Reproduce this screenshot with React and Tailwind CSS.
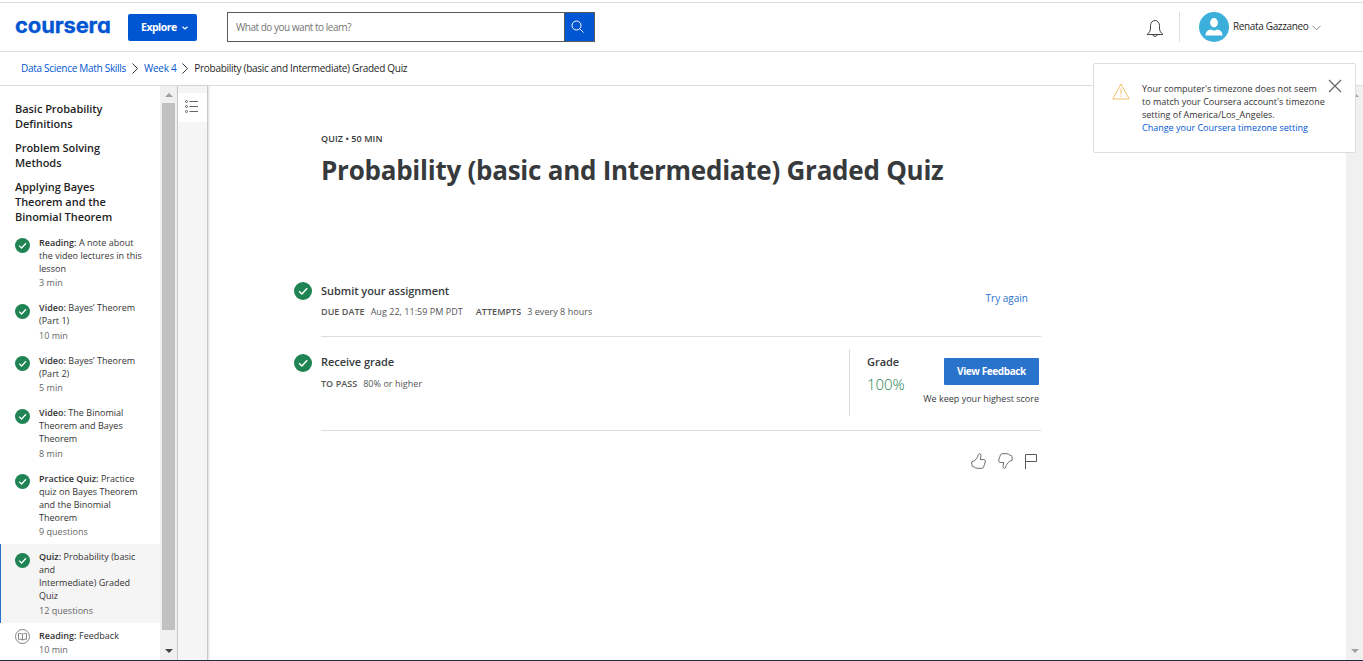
import React from 'react';

const items = [
  { kind: 'Reading:', lines: ['A note about', 'the video lectures in this', 'lesson'], meta: '3 min', box: 'h-[65px]', icon: 'mt-[8px]', metaGap: 'mt-[1px]' },
  { kind: 'Video:', lines: ['Bayes’ Theorem', '(Part 1)'], meta: '10 min', box: 'h-[53px]', icon: 'mt-[9px]', metaGap: 'mt-[2px]' },
  { kind: 'Video:', lines: ['Bayes’ Theorem', '(Part 2)'], meta: '5 min', box: 'h-[52px]', icon: 'mt-[8px]', metaGap: 'mt-[1px]' },
  { kind: 'Video:', lines: ['The Binomial', 'Theorem and Bayes', 'Theorem'], meta: '8 min', box: 'h-[66px]', icon: 'mt-[9px]', metaGap: 'mt-[2px]' },
  { kind: 'Practice Quiz:', lines: ['Practice', 'quiz on Bayes Theorem', 'and the Binomial', 'Theorem'], meta: '9 questions', box: 'h-[78px]', icon: 'mt-[8px]', metaGap: 'mt-[1px]' },
  { kind: 'Quiz:', lines: ['Probability (basic', 'and', 'Intermediate) Graded', 'Quiz'], meta: '12 questions', box: 'h-[79px]', icon: 'mt-[9px]', metaGap: 'mt-[2px]', active: true },
  { kind: 'Reading:', lines: ['Feedback'], meta: '10 min', box: 'h-[40px]', icon: 'mt-[6px]', metaGap: 'mt-[1px]', open: true },
];

function Check({ className }) {
  return (
    <svg viewBox="0 0 18 18" className={className} fill="none">
      <circle cx="9" cy="9" r="9" fill="#1f8354" />
      <path d="M5 9.2 7.9 12 13.2 6.3" stroke="#fff" strokeWidth="1.5" />
    </svg>
  );
}

function Book({ className }) {
  return (
    <svg viewBox="0 0 15 15" className={className} fill="none" stroke="#666" strokeWidth="0.8">
      <circle cx="7.5" cy="7.5" r="7" />
      <path d="M7.5 5.2C6.5 4.4 5 4.3 3.5 4.5v5.8c1.5-.2 3 0 4 .7 1-.7 2.5-.9 4-.7V4.5c-1.5-.2-3-.1-4 .7zM7.5 5.2V11" />
    </svg>
  );
}

function Header() {
  return (
    <header className="mt-[2px] flex h-[50px] shrink-0 items-start border-y border-[#dddddd] pt-[9px]">
      <div className="ml-[15px] mt-px h-[24px] w-[96px] whitespace-nowrap font-['Inter'] text-[22px] font-bold leading-[24px] tracking-[-0.15px] text-[#0056d2] [font-feature-settings:'cv11'] [-webkit-text-stroke:0.3px_#0056d2]">coursera</div>
      <button className="ml-[17px] mt-[2px] flex h-[27px] w-[69px] items-center rounded-[2px] bg-[#0056d2] pl-[13px] text-[10.5px] font-bold tracking-[-0.5px] text-white">
        Explore
        <svg viewBox="0 0 6 4" className="ml-[5px] mt-px h-[4px] w-[6px]" fill="none" stroke="#fff" strokeWidth="1.2"><path d="M.5.7 3 3 5.5.7" /></svg>
      </button>
      <div className="ml-[30px] flex h-[30px] w-[368px] border border-[#5a5a5a]">
        <div className="flex flex-1 items-center pl-[8px] text-[10px] tracking-[-0.48px] text-[#757575]">What do you want to learn?</div>
        <div className="flex w-[30px] items-center justify-center border-l border-[#5a5a5a] bg-[#0056d2]">
          <svg viewBox="0 0 13 13" className="mb-px mr-[4px] h-[13px] w-[13px]" fill="none" stroke="#fff"><circle cx="5.5" cy="5.5" r="4.5" /><path d="m8.7 8.7 3.8 3.8" /></svg>
        </div>
      </div>
      <svg viewBox="0 0 18 20" className="ml-[551px] mt-[7px] h-[20px] w-[18px]" fill="none" stroke="#444" strokeWidth="1">
        <path d="M1 15.5c2-1.5 3.5-3.500 3.500-6.500V6.500a4.500 5 0 0 1 9 0V9c0 3 1.500 5 3.500 6.500zM6.800 15.800a2.300 2.300 0 0 0 4.400 0" />
      </svg>
      <div className="ml-[15px] h-[30px] w-px bg-[#dddddd]" />
      <svg viewBox="0 0 30 30" className="ml-[19px] h-[30px] w-[30px]">
        <circle cx="15" cy="15" r="15" fill="#3cafdb" />
        <ellipse cx="15" cy="10.8" rx="3.9" ry="4.7" fill="#fff" />
        <path d="M6.500 23.500c0-4 2.500-5.300 5.600-5.900 1.700 1.300 4.100 1.300 5.800 0 3.100.6 5.600 1.900 5.600 5.900z" fill="#fff" />
      </svg>
      <span className="ml-[4px] mt-[7px] w-[76px] whitespace-nowrap text-[10px] leading-[15px] tracking-[-0.35px] text-[#1f1f1f]">Renata Gazzaneo</span>
      <svg viewBox="0 0 9 6" className="ml-[3px] mt-[13px] h-[6px] w-[9px]" fill="none" stroke="#888"><path d="m.5.8 4 4 4-4" /></svg>
    </header>
  );
}

function Crumb() {
  return <svg viewBox="0 0 6 11" className="mx-[6px] h-[11px] w-[6px]" fill="none" stroke="#333"><path d="m.5.5 5 5-5 5" /></svg>;
}

function Notice() {
  return (
    <aside className="absolute left-[1093px] top-[63px] flex h-[90px] w-[263px] rounded-[2px] border border-[#dddddd] bg-white">
      <svg viewBox="0 0 18 17" className="ml-[18px] mt-[19px] h-[17px] w-[18px] shrink-0" fill="none" stroke="#f5c26b"><path d="M9 1 17.200 16H.8zM9 5.500v6M9 12.800v1.400" /></svg>
      <p className="ml-[12px] mt-[18px] whitespace-nowrap text-[9px] leading-[13px] text-[#333]">
        Your computer's timezone does not seem<br />to match your Coursera account's timezone<br />setting of America/Los_Angeles.<br />
        <span className="text-[#0056d2]">Change your Coursera timezone setting</span>
      </p>
      <svg viewBox="0 0 14 14" className="absolute left-[234px] top-[15px] h-[14px] w-[14px]" fill="none" stroke="#666" strokeWidth="1.2"><path d="m1 1 12 12M13 1 1 13" /></svg>
    </aside>
  );
}

function Sidebar() {
  return (
    <nav className="w-[160px] shrink-0 overflow-hidden pt-[15px]">
      <div className="flex h-[129px] flex-col gap-[9px] whitespace-nowrap pl-[15px] text-[11px] font-semibold leading-[15px] tracking-[-0.04px] text-[#1f1f1f]">
        <h3>Basic Probability<br />Definitions</h3>
        <h3>Problem Solving<br />Methods</h3>
        <h3>Applying Bayes<br />Theorem and the<br />Binomial Theorem</h3>
      </div>
      {items.map((it, i) => (
        <div key={i} className={`flex items-start border-l pl-[14px] ${it.box} ${it.active ? 'border-[#2a73cc] bg-[#f5f5f5]' : 'border-transparent'}`}>
          {it.open ? <Book className={`h-[15px] w-[15px] shrink-0 ${it.icon}`} /> : <Check className={`h-[15px] w-[15px] shrink-0 ${it.icon}`} />}
          <div className="ml-[9px] mt-[6px] whitespace-nowrap text-[9px] leading-[13px] tracking-[0.02px] text-[#333]">
            <span className="font-semibold">{it.kind}</span> {it.lines.map((l, j) => <React.Fragment key={j}>{j > 0 && <br />}{l}</React.Fragment>)}
            <div className={`text-[#666] ${it.metaGap}`}>{it.meta}</div>
          </div>
        </div>
      ))}
    </nav>
  );
}

function Arrow({ up, color, className }) {
  return <svg viewBox="0 0 8 4" className={`h-[4px] w-[8px] ${className}`} fill={color}><path d={up ? 'M0 4 4 0l4 4z' : 'M0 0h8L4 4z'} /></svg>;
}

function Thumb({ className }) {
  return (
    <svg viewBox="0 0 15 16" className={`h-[16px] w-[15px] ${className}`} fill="none" stroke="currentColor" strokeWidth="0.9" strokeLinejoin="round">
      <path d="M2.500 8.200C4 7.600 6.200 5.200 6.900 3.300 7.200 2.200 7.300.6 8.600.7c1.200.1 1.500 1.300 1.300 2.500L9.300 6.500h3.500c1 0 1.500.6 1.500 1.400 0 1-.1 1.500-.5 2.300-.1 1.200-.4 1.900-.9 2.600-.2 1.600-.9 2.500-2.300 2.500H6.400c-1.300 0-2-.4-3-1.300L1.600 13.500C.8 12 .5 10.400.9 8.500z" />
    </svg>
  );
}

function Feedback() {
  return (
    <div className="mt-[22px] flex w-[743px] items-center justify-end text-[#55595c]">
      <Thumb className="" />
      <Thumb className="ml-[12px] rotate-180" />
      <svg viewBox="0 0 13 16" className="ml-[11px] h-[16px] w-[13px]" fill="none" stroke="currentColor"><path d="M1.500 16V1.500h11v7h-11" /></svg>
    </div>
  );
}

export default function App() {
  return (
    <div className="relative flex h-[661px] w-[1363px] flex-col overflow-hidden bg-white font-['Open_Sans',sans-serif]">
      <Header />
      <div className="flex h-[34px] shrink-0 items-center whitespace-nowrap border-b border-[#dddddd] pl-[21px] text-[10px] tracking-[-0.29px] text-[#1f1f1f]">
        <a className="text-[#0056d2]">Data Science Math Skills</a><Crumb /><a className="text-[#0056d2]">Week 4</a><Crumb /><span>Probability (basic and Intermediate) Graded Quiz</span>
      </div>
      <div className="flex h-[574px] shrink-0">
        <Sidebar />
        <div className="flex w-[17px] shrink-0 flex-col items-center bg-[#f0f0f0]">
          <Arrow up color="#a0a0a0" className="mt-[7px]" />
          <div className="mt-[6px] h-[527px] w-[13px] bg-[#c1c1c1]" />
          <Arrow color="#444" className="mt-[19px]" />
        </div>
        <div className="w-[31px] shrink-0 border-x border-[#c8c8c8] bg-[#f5f5f5] pt-[7px] shadow-[1px_0_2px_rgba(0,0,0,0.15)]">
          <div className="flex h-[29px] items-center bg-white pb-[2px] pl-[7px]">
            <svg viewBox="0 0 13 13" className="h-[13px] w-[13px]" fill="none" stroke="#555" strokeWidth="0.9"><circle cx="1.5" cy="1.5" r="1" /><circle cx="1.5" cy="6.5" r="1" /><circle cx="1.5" cy="11.5" r="1" /><path d="M4.500 1.500H13M4.500 6.500H13M4.500 11.500H13" /></svg>
          </div>
        </div>
        <main className="w-[833px] shrink-0 pl-[86px] text-[#373a3c]">
          <div className="ml-[27px] mt-[46px] text-[9px] font-semibold leading-[13px] tracking-[0.08px]">QUIZ • 50 MIN</div>
          <h1 className="ml-[27px] mt-[7px] whitespace-nowrap text-[26px] font-bold leading-[36px] tracking-[-0.25px]">Probability (basic and Intermediate) Graded Quiz</h1>
          <section className="mt-[84px] flex h-[65px]">
            <Check className="mt-[10px] h-[18px] w-[18px] shrink-0" />
            <div className="ml-[9px] flex w-[720px] border-b border-[#dddddd]">
              <div className="flex-1 pt-[10px]">
                <h2 className="text-[11px] font-semibold leading-[17px] tracking-[-0.05px]">Submit your assignment</h2>
                <p className="mt-[5px] whitespace-nowrap text-[9px] leading-[15px] tracking-[0.04px] text-[#555]"><b className="font-semibold">DUE DATE</b><span className="ml-[6px]">Aug 22, 11:59 PM PDT</span><b className="ml-[13px] font-semibold">ATTEMPTS</b><span className="ml-[6px]">3 every 8 hours</span></p>
              </div>
              <a className="mr-[13px] mt-[19px] text-[10px] leading-[15px] text-[#2a73cc]">Try again</a>
            </div>
          </section>
          <section className="flex h-[94px]">
            <Check className="mt-[17px] h-[18px] w-[18px] shrink-0" />
            <div className="ml-[9px] flex w-[720px] border-b border-[#dddddd]">
              <div className="w-[528px] pt-[16px]">
                <h2 className="text-[11px] font-semibold leading-[17px] tracking-[-0.05px]">Receive grade</h2>
                <p className="mt-[6px] whitespace-nowrap text-[9px] leading-[15px] tracking-[0.04px] text-[#555]"><b className="font-semibold">TO PASS</b><span className="ml-[6px]">80% or higher</span></p>
              </div>
              <div className="mt-[12px] h-[67px] w-px bg-[#dddddd]" />
              <div className="ml-[17px] w-[56px] pt-[16px]">
                <h2 className="text-[11px] font-semibold leading-[17px] tracking-[-0.05px]">Grade</h2>
                <div className="mt-[4px] text-[15px] font-light leading-[20px] tracking-[-0.1px] text-[#1f8354]">100%</div>
              </div>
              <div className="flex w-[116px] flex-col items-end pt-[21px]">
                <button className="h-[27px] w-[95px] rounded-[1px] bg-[#2a73cc] text-[10px] font-bold tracking-[-0.4px] text-white">View Feedback</button>
                <div className="mt-[6px] whitespace-nowrap text-[9px] leading-[15px]">We keep your highest score</div>
              </div>
            </div>
          </section>
          <Feedback />
        </main>
        <div className="flex-1" />
        <div className="flex w-[17px] shrink-0 flex-col items-center justify-between bg-[#f0f0f0] py-[7px]">
          <Arrow up color="#a0a0a0" /><Arrow color="#a0a0a0" />
        </div>
      </div>
      <div className="h-px bg-[#1f2a44]" />
      <Notice />
    </div>
  );
}
